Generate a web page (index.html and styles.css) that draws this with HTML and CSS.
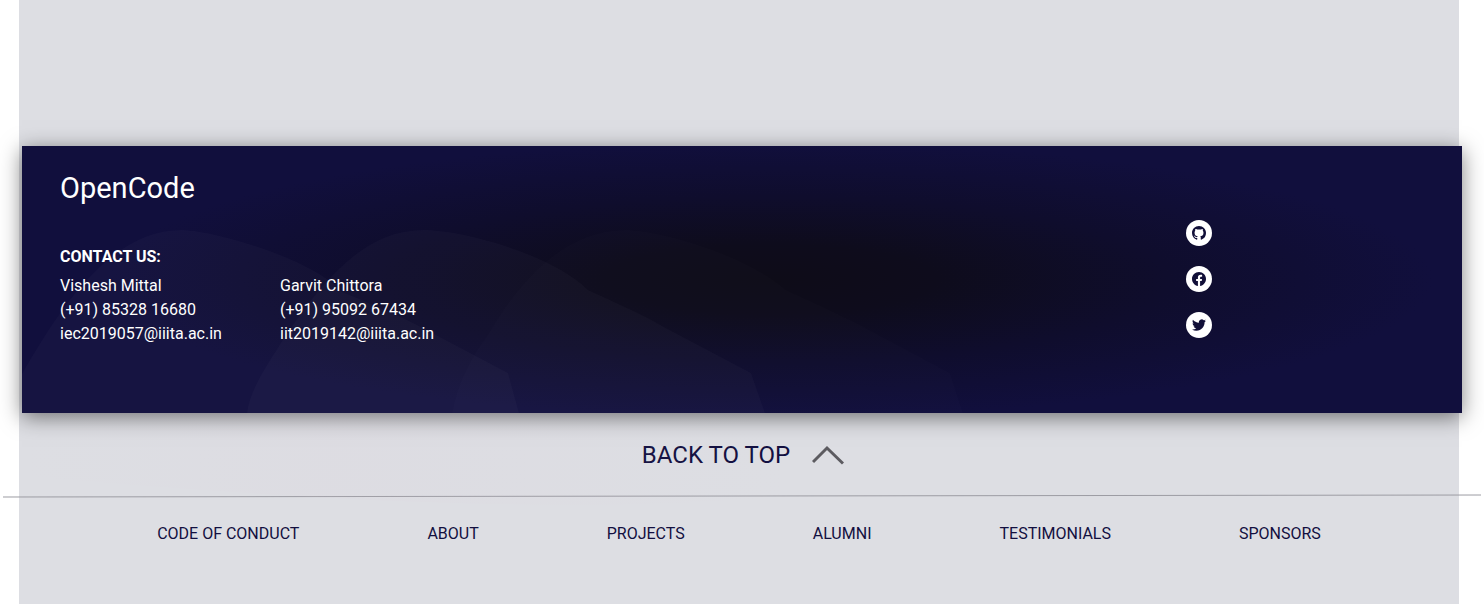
FILE: index.html
```html
<!DOCTYPE html>
<html lang="en">
<head>
<meta charset="utf-8">
<title>OpenCode</title>
<link rel="stylesheet" href="styles.css">
</head>
<body>
<div class="page">
  <footer class="footer">
    <section class="card">
      <svg class="waves" width="960" height="267" viewBox="0 0 960 267" aria-hidden="true">
        <defs>
          <linearGradient id="haze" x1="0" x2="1" y1="0" y2="0">
            <stop offset="0" stop-color="#dcc8d8" stop-opacity="0"/>
            <stop offset="0.4" stop-color="#dcc8d8" stop-opacity="0.08"/>
            <stop offset="1" stop-color="#dcc8d8" stop-opacity="0"/>
          </linearGradient>
        </defs>
        <path d="M0 228C36 165 88 84 159 84C190 84 290 112 320 146C350 158 380 171 397 180L486 227L497 267H0Z"/>
        <path d="M225 267C228 242 248 215 262 192C305 128 345 84 402 84C440 84 530 108 566 144C596 158 620 168 640 180L729 227L743 267Z"/>
        <path class="waves-faint" d="M430 267C436 235 450 210 465 190C500 130 545 84 603 84C640 84 726 110 764 144C800 160 820 170 840 180L928 227L941 267Z"/>
        <path class="waves-haze" d="M0 267H743L770 350C600 364 400 364 0 330Z"/>
      </svg>
      <div class="about">
        <h1 class="logo">OpenCode</h1>
        <h2 class="heading">CONTACT US:</h2>
        <div class="contacts">
          <address class="contact">
            <span>Vishesh Mittal</span>
            <span>(+91) 85328 16680</span>
            <span>iec2019057@iiita.ac.in</span>
          </address>
          <address class="contact">
            <span>Garvit Chittora</span>
            <span>(+91) 95092 67434</span>
            <span>iit2019142@iiita.ac.in</span>
          </address>
        </div>
      </div>
      <div class="social">
        <a href="#github" aria-label="GitHub"><svg width="14" height="14" viewBox="0 0 16 16"><path d="M8 0C3.58 0 0 3.58 0 8c0 3.54 2.29 6.53 5.47 7.59.4.07.55-.17.55-.38 0-.19-.01-.82-.01-1.49-2.01.37-2.53-.49-2.69-.94-.09-.23-.48-.94-.82-1.13-.28-.15-.68-.52-.01-.53.63-.01 1.08.58 1.23.82.72 1.21 1.87.87 2.33.66.07-.52.28-.87.51-1.07-1.78-.2-3.64-.89-3.64-3.95 0-.87.31-1.59.82-2.15-.08-.2-.36-1.02.08-2.12 0 0 .67-.21 2.2.82.64-.18 1.32-.27 2-.27s1.36.09 2 .27c1.53-1.04 2.2-.82 2.2-.82.44 1.1.16 1.92.08 2.12.51.56.82 1.27.82 2.15 0 3.07-1.87 3.75-3.65 3.95.29.25.54.73.54 1.48 0 1.07-.01 1.93-.01 2.2 0 .21.15.46.55.38A8.01 8.01 0 0 0 16 8c0-4.42-3.58-8-8-8z"/></svg></a>
        <a href="#facebook" aria-label="Facebook"><svg width="14" height="14" viewBox="0 0 24 24"><path d="M24 12.07C24 5.4 18.63 0 12 0S0 5.4 0 12.07C0 18.1 4.39 23.1 10.13 24v-8.44H7.08v-3.49h3.05V9.41c0-3.02 1.79-4.69 4.53-4.69 1.31 0 2.68.24 2.68.24v2.97h-1.51c-1.49 0-1.96.93-1.96 1.89v2.25h3.33l-.53 3.49h-2.8V24C19.61 23.1 24 18.1 24 12.07z"/></svg></a>
        <a href="#twitter" aria-label="Twitter"><svg width="14" height="14" viewBox="0 0 24 24"><path d="M23.95 4.57a10 10 0 0 1-2.82.77 4.96 4.96 0 0 0 2.16-2.72c-.95.55-2 .95-3.13 1.18a4.92 4.92 0 0 0-8.38 4.48C7.69 8.09 4.07 6.13 1.64 3.16a4.82 4.82 0 0 0-.67 2.48c0 1.71.87 3.21 2.19 4.1a4.9 4.9 0 0 1-2.23-.62v.06a4.92 4.92 0 0 0 3.95 4.83 5 5 0 0 1-2.21.08 4.94 4.94 0 0 0 4.6 3.42A9.87 9.87 0 0 1 0 19.54a13.99 13.99 0 0 0 7.55 2.21c9.05 0 14-7.5 14-13.98 0-.21 0-.42-.02-.63a9.94 9.94 0 0 0 2.42-2.57z"/></svg></a>
      </div>
    </section>
    <a class="back-to-top" href="#top">
      <span>BACK TO TOP</span>
      <svg width="32" height="20" viewBox="0 0 32 20" aria-hidden="true"><path d="M1 17L15 3L31 18.500"/></svg>
    </a>
    <svg class="divider" viewBox="0 0 1478 4" preserveAspectRatio="none" aria-hidden="true"><path d="M0 3L1478 1"/></svg>
    <nav class="links">
      <a href="#conduct">CODE OF CONDUCT</a>
      <a href="#about">ABOUT</a>
      <a href="#projects">PROJECTS</a>
      <a href="#alumni">ALUMNI</a>
      <a href="#testimonials">TESTIMONIALS</a>
      <a href="#sponsors">SPONSORS</a>
    </nav>
  </footer>
</div>
</body>
</html>
```
FILE: styles.css
```css
* {
  box-sizing: border-box;
}

body {
  margin: 0;
  background: #fff;
  font-family: Roboto, sans-serif;
  font-size: 16px;
  line-height: 24px;
  color: #120f40;
}

a {
  color: inherit;
  text-decoration: none;
}

.page {
  min-height: 100vh;
  margin: 0 25px 0 19px;
  padding-top: 146px;
  background: #dddee3;
}

.footer {
  display: flex;
  flex-direction: column;
}

.card {
  position: relative;
  display: flex;
  justify-content: space-between;
  align-items: center;
  margin: 0 -3px 0 3px;
  padding: 24px 250px 67px 38px;
  color: #fff;
  background: radial-gradient(ellipse 46% 52% at 52% 50%, #0e0c18 0%, #0e0c1c 25%, #0f0d2d 60%, #110f3d 100%);
  box-shadow: 0 4px 20px rgba(0, 0, 0, 0.5);
}

.waves {
  position: absolute;
  left: 0;
  bottom: 0;
  overflow: visible;
  fill: rgba(255, 250, 255, 0.022);
}

.waves-faint {
  fill: rgba(255, 250, 255, 0.01);
}

.waves-haze {
  fill: url(#haze);
}

.about {
  position: relative;
}

.logo {
  margin: 0 0 39px;
  font-size: 29px;
  font-weight: 400;
  line-height: 36px;
}

.heading {
  margin: 0 0 5px;
  font-size: 16px;
  font-weight: 700;
  line-height: 24px;
}

.contacts {
  display: flex;
}

.contact {
  display: flex;
  flex-direction: column;
  width: 220px;
  font-style: normal;
}

.social {
  display: flex;
  flex-direction: column;
  gap: 20px;
  margin-top: 42px;
}

.social a {
  display: flex;
  align-items: center;
  justify-content: center;
  width: 26px;
  height: 26px;
  border-radius: 50%;
  background: #fff;
  fill: #110f38;
}

.back-to-top {
  display: flex;
  align-items: center;
  align-self: center;
  gap: 22px;
  margin: 26px 0 23px 8px;
  font-size: 24px;
  line-height: 32px;
}

.back-to-top svg {
  fill: none;
  stroke: #5c5b60;
  stroke-width: 3;
}

.divider {
  width: calc(100% + 38px);
  height: 4px;
  margin: 0 -22px 0 -16px;
  fill: none;
  stroke: #9c9ca3;
  stroke-width: 1;
}

.links {
  display: flex;
  justify-content: center;
  gap: 128px;
  padding: 24px 0 58px;
}
```
